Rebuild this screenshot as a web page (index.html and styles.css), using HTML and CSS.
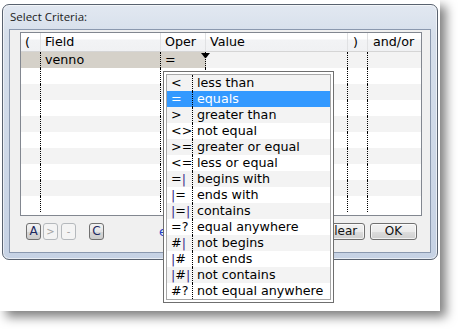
FILE: index.html
```html
<!DOCTYPE html>
<html>
<head>
<meta charset="utf-8">
<link rel="stylesheet" href="styles.css">
</head>
<body>
<div class="shot">
  <div class="win">
    <div class="title">Select Criteria:</div>
    <div class="client">
      <div class="grid">
        <div class="row head">
          <div class="c c1">(</div><div class="c c2">Field</div><div class="c c3">Oper</div><div class="c c4">Value</div><div class="c c5">)</div><div class="c c6">and/or</div>
        </div>
        <div class="row sel">
          <div class="c c1"></div><div class="c c2">venno</div><div class="c c3">=</div><div class="c c4"></div><div class="c c5"></div><div class="c c6"></div>
        </div>
        <div class="row"><div class="c c1"></div><div class="c c2"></div><div class="c c3"></div><div class="c c4"></div><div class="c c5"></div><div class="c c6"></div></div>
        <div class="row"><div class="c c1"></div><div class="c c2"></div><div class="c c3"></div><div class="c c4"></div><div class="c c5"></div><div class="c c6"></div></div>
        <div class="row"><div class="c c1"></div><div class="c c2"></div><div class="c c3"></div><div class="c c4"></div><div class="c c5"></div><div class="c c6"></div></div>
        <div class="row"><div class="c c1"></div><div class="c c2"></div><div class="c c3"></div><div class="c c4"></div><div class="c c5"></div><div class="c c6"></div></div>
        <div class="row"><div class="c c1"></div><div class="c c2"></div><div class="c c3"></div><div class="c c4"></div><div class="c c5"></div><div class="c c6"></div></div>
        <div class="row"><div class="c c1"></div><div class="c c2"></div><div class="c c3"></div><div class="c c4"></div><div class="c c5"></div><div class="c c6"></div></div>
        <div class="row"><div class="c c1"></div><div class="c c2"></div><div class="c c3"></div><div class="c c4"></div><div class="c c5"></div><div class="c c6"></div></div>
        <div class="row"><div class="c c1"></div><div class="c c2"></div><div class="c c3"></div><div class="c c4"></div><div class="c c5"></div><div class="c c6"></div></div>
        <div class="row"><div class="c c1"></div><div class="c c2"></div><div class="c c3"></div><div class="c c4"></div><div class="c c5"></div><div class="c c6"></div></div>
      </div>
      <div class="bar">
        <button class="sb">A</button>
        <button class="sb dis gt">&gt;</button>
        <button class="sb dis mn">-</button>
        <button class="sb cb">C</button>
        <span class="link">e</span>
        <button class="btn clear"><span class="cl">Clear</span></button>
        <button class="btn ok">OK</button>
      </div>
    </div>
  </div>
  <span class="caret"></span>
  <div class="drop">
    <ul class="list">
      <li><span class="sym">&lt;</span><span class="lbl">less than</span></li>
      <li class="on"><span class="sym">=</span><span class="lbl">equals</span></li>
      <li><span class="sym">&gt;</span><span class="lbl">greater than</span></li>
      <li><span class="sym">&lt;&gt;</span><span class="lbl">not equal</span></li>
      <li><span class="sym">&gt;=</span><span class="lbl">greater or equal</span></li>
      <li><span class="sym">&lt;=</span><span class="lbl">less or equal</span></li>
      <li><span class="sym">=<b>|</b></span><span class="lbl">begins with</span></li>
      <li><span class="sym"><b>|</b>=</span><span class="lbl">ends with</span></li>
      <li><span class="sym"><b>|</b>=<b>|</b></span><span class="lbl">contains</span></li>
      <li><span class="sym">=?</span><span class="lbl">equal anywhere</span></li>
      <li><span class="sym">#<b>|</b></span><span class="lbl">not begins</span></li>
      <li><span class="sym"><b>|</b>#</span><span class="lbl">not ends</span></li>
      <li><span class="sym"><b>|</b>#<b>|</b></span><span class="lbl">not contains</span></li>
      <li><span class="sym">#?</span><span class="lbl">not equal anywhere</span></li>
    </ul>
  </div>
</div>
</body>
</html>
```
FILE: styles.css
```css
html, body {
  min-height: 329px;
}

body {
  margin: 0;
  background: #fff;
  font-family: "DejaVu Sans", sans-serif;
  font-size: 12.7px;
  color: #000;
}

.shot {
  position: relative;
  width: 440px;
  height: 311px;
  box-sizing: border-box;
  padding: 4px 0 0 2px;
  background: #fff;
  box-shadow: 6px 6px 10px rgba(0, 0, 0, 0.5);
}

.win {
  width: 436px;
  height: 256px;
  box-sizing: border-box;
  border: 1px solid #59626f;
  border-radius: 7px;
  background: linear-gradient(180deg, #e2e8f1 0, #d6dfeb 30px, #c6d2e4 100%);
  box-shadow: inset 0 0 0 1px rgba(255, 255, 255, 0.6);
  display: flex;
  flex-direction: column;
}

.title {
  height: 24px;
  padding-left: 7px;
  font-family: "Open Sans", sans-serif;
  font-size: 11.5px;
  line-height: 23px;
  color: #1b1b1b;
}

.client {
  flex: 1;
  margin: 0 6px 6px;
  border: 1px solid #8a98ae;
  background: #f0f0f0;
  padding: 2px 8px 0 10px;
  display: flex;
  flex-direction: column;
}

.grid {
  height: 184px;
  box-sizing: border-box;
  border: 1px solid #828790;
  background: #fff;
  overflow: hidden;
}

.row {
  display: flex;
  height: 16px;
  line-height: 16px;
}

.row:nth-child(even) {
  background: #f3f3f3;
}

.head {
  height: 19px;
  box-sizing: border-box;
  line-height: 18px;
  background: linear-gradient(#fff 0, #fff 6px, #f2f3f5 7px, #f0f1f3 100%);
  border-bottom: 1px solid #d5d5d5;
}

.c {
  box-sizing: border-box;
  padding-left: 4px;
  white-space: nowrap;
  overflow: hidden;
  border-right: 1px dotted #000;
}

.head .c {
  border-right: 1px solid #e0e1e3;
}

.c1 { width: 20px; }
.c2 { width: 120px; }
.c3 { width: 45px; }
.c4 { width: 142px; }
.c5 { width: 20px; }
.c6 { width: 53px; border-right: 0; }
.head .c6 { border-right: 0; }
.head .c5, .head .c6 { padding-left: 5px; }

.sel .c1, .sel .c2, .sel .c3 {
  background: #d5d1c9;
}

.bar {
  display: flex;
  align-items: center;
  margin-top: 7px;
  height: 17px;
  padding-left: 6px;
}

.sb {
  width: 15px;
  height: 17px;
  box-sizing: border-box;
  padding: 0;
  border: 1px solid #707070;
  border-radius: 3px;
  background: linear-gradient(#f3f3f3 0, #e6e6e6 50%, #d6d6d6 51%, #cccccc 100%);
  font-family: "DejaVu Sans", sans-serif;
  font-size: 12px;
  line-height: 15px;
  color: #1c2860;
}

.sb.dis {
  border-color: #b5b9bd;
  background: #f4f4f4;
  color: #a3a3a3;
  font-size: 10px;
}

.gt { margin-left: 2px; }
.mn { margin-left: 3px; }
.cb { margin-left: 13px; }

.link {
  margin-left: 55px;
  color: #2040c8;
}

.btn {
  width: 47px;
  height: 17px;
  box-sizing: border-box;
  padding: 0;
  border: 1px solid #707070;
  border-radius: 3px;
  background: linear-gradient(#f2f2f2 0, #ebebeb 50%, #dddddd 51%, #cfcfcf 100%);
  box-shadow: inset 0 0 0 1px rgba(255, 255, 255, 0.7);
  font-family: "DejaVu Sans", sans-serif;
  font-size: 12px;
  line-height: 15px;
  color: #111;
}

.clear { margin-left: auto; }
.ok { margin-left: 5px; margin-right: 5px; }

.caret {
  position: absolute;
  left: 201px;
  top: 53px;
  width: 1px;
  height: 0;
  border-left: 4px solid transparent;
  border-right: 4px solid transparent;
  border-top: 5px solid #000;
}

.drop {
  position: absolute;
  left: 163px;
  top: 71px;
  border: 1px solid #6f6f6f;
  padding: 2px;
  background: #fff;
}

.list {
  margin: 0;
  padding: 0;
  list-style: none;
  width: 163px;
  border: 1px solid #a8a8a8;
}

.list li {
  display: flex;
  height: 16px;
  line-height: 16px;
  white-space: nowrap;
}

.list li:nth-child(odd) {
  background: #f3f3f3;
}

.list li.on {
  background: #3399ff;
  color: #fff;
}

.sym {
  width: 26px;
  flex: none;
  box-sizing: border-box;
  padding-left: 4px;
  border-right: 1px dotted #000;
}

.sym b {
  font-weight: normal;
  color: #3a2a8a;
}

.lbl {
  padding-left: 4px;
}
```
